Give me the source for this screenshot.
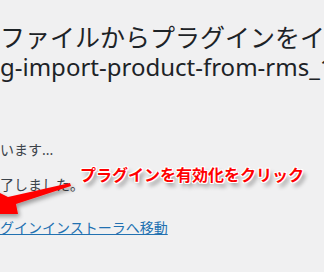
export default function App() {
  return (
    <div className="relative h-[272px] w-[324px] overflow-hidden bg-[#f0f0f1] font-['Noto_Sans','Noto_Sans_CJK_JP',sans-serif]">
      <div className="pt-[22px] whitespace-nowrap">
        <h1 className="text-[25px] leading-[30px] font-normal text-[#1d2327]">
          ファイルからプラグインをインストール中
        </h1>
        <h1 className="text-[24px] leading-[30px] font-normal text-[#1d2327]">
          g-import-product-from-rms_1.0.zip
        </h1>
        <p className="mt-[58px] text-[14px] leading-[20px] text-[#3c434a]">います...</p>
        <p className="mt-[15px] text-[14px] leading-[20px] text-[#3c434a]">了しました。</p>
        <p className="mt-[23px] text-[14px] leading-[20px]">
          <a href="#" className="text-[#2271b1] underline">
            グインインストーラへ移動
          </a>
        </p>
      </div>

      {/* 注釈の矢印 */}
      <svg className="absolute left-0 top-0" width="324" height="272" viewBox="0 0 324 272">
        <defs>
          <filter id="sh" x="-20%" y="-50%" width="140%" height="200%">
            <feDropShadow dx="2" dy="3" stdDeviation="2" floodColor="#000" floodOpacity="0.35" />
          </filter>
        </defs>
        <polygon
          points="70,183 71,186 16,204 18,214 -12,214 -6,190 8,197"
          fill="#ff0000"
          filter="url(#sh)"
        />
      </svg>

      <div
        className="absolute left-[80px] top-[163px] whitespace-nowrap text-[16px] leading-[24px] font-bold text-[#ff0000]"
        style={{
          textShadow:
            "1px 0 0 #fff, -1px 0 0 #fff, 0 1px 0 #fff, 0 -1px 0 #fff, 1px 1px 0 #fff, -1px -1px 0 #fff, 1px -1px 0 #fff, -1px 1px 0 #fff, 3px 4px 4px rgba(0,0,0,0.45)",
        }}
      >
        プラグインを有効化をクリック
      </div>
    </div>
  );
}
